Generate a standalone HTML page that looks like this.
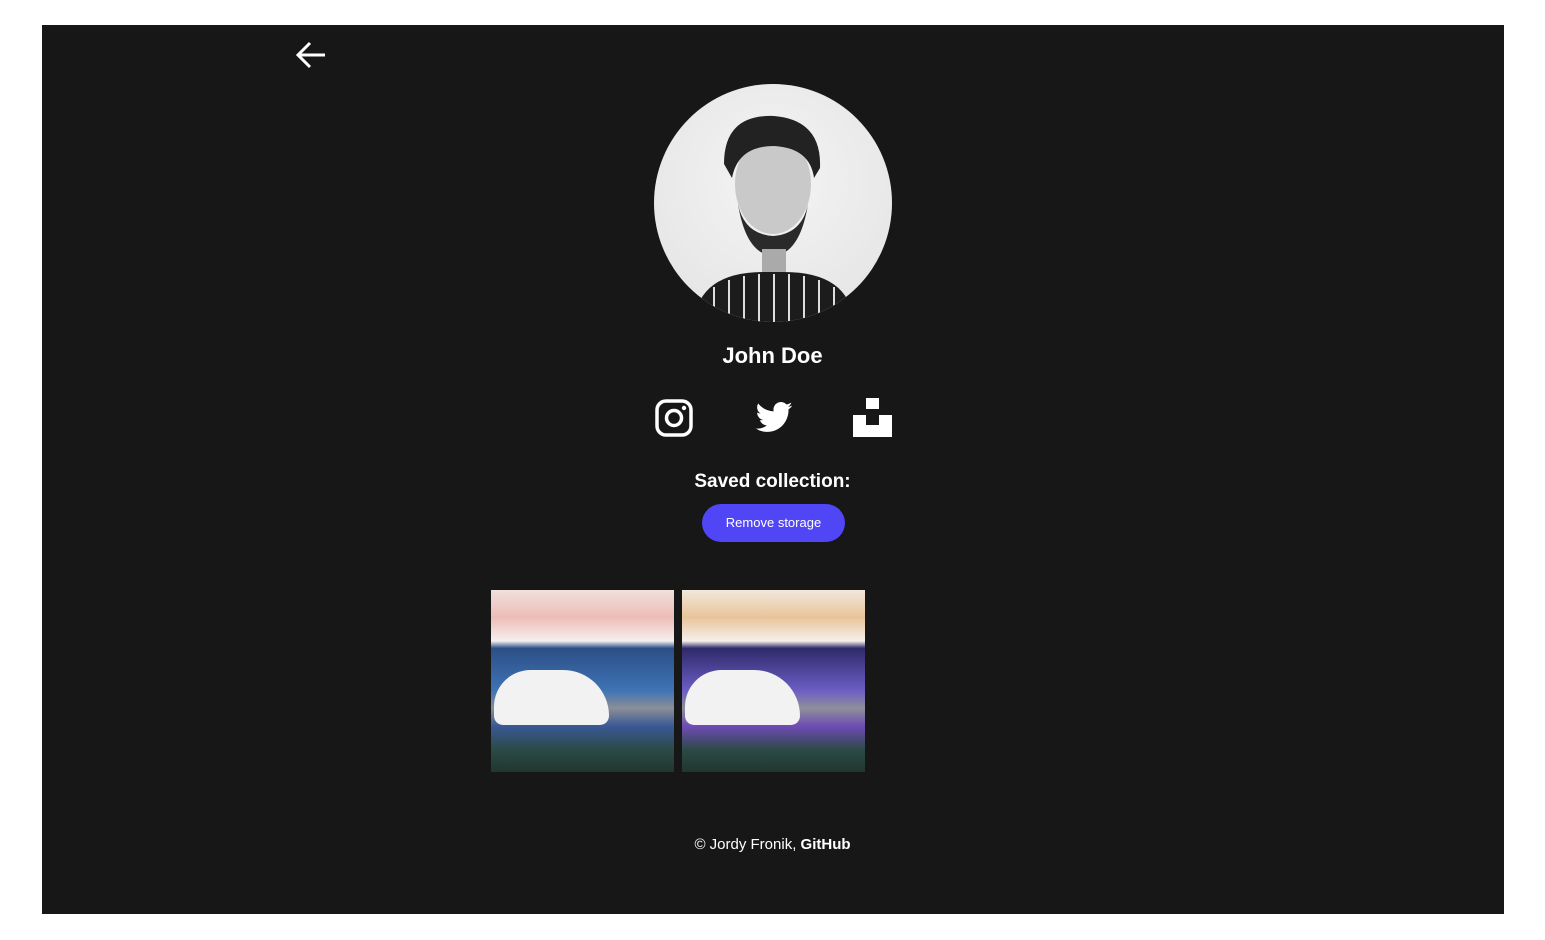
<!DOCTYPE html>
<html><head><style>
body{margin:0;width:1545px;height:940px;background:#fff;font-family:"Liberation Sans",sans-serif;position:relative;overflow:hidden}
#p{position:absolute;left:42px;top:25px;width:1462px;height:889px;background:#171717}
.a{position:absolute}
.img{position:absolute;top:590px;width:183px;height:182px;overflow:hidden}
</style></head><body>
<div id="p"></div>
<svg class="a" style="left:295px;top:40px" width="32" height="30" viewBox="0 0 32 30"><path d="M30 15H4M15 3L3 15l12 12" stroke="#fff" stroke-width="3" fill="none"/></svg>
<div class="a" style="left:654px;top:84px;width:238px;height:238px;border-radius:50%;overflow:hidden;background:radial-gradient(circle at 50% 40%,#f4f4f4,#e2e2e2)">
<svg width="238" height="238" viewBox="0 0 238 238">
<ellipse cx="119" cy="100" rx="38" ry="50" fill="#c9c9c9"/>
<path d="M70 80q0-50 50-48q48 4 46 52l-6 10q-4-30-40-32q-36 0-42 32z" fill="#222"/>
<path d="M84 120q8 50 35 52q27-2 35-52q-6 30-35 32q-29-2-35-32z" fill="#2a2a2a"/>
<rect x="108" y="165" width="24" height="25" fill="#aaa"/>
<path d="M40 238q5-50 70-50h20q65 0 70 50z" fill="#1c1c1c"/>
<g stroke="#ddd" stroke-width="2"><path d="M60 238v-35M75 238v-42M90 238v-46M105 238v-48M120 238v-48M135 238v-48M150 238v-46M165 238v-42M180 238v-35"/></g>
</svg></div>
<div class="a" style="left:0;width:1545px;top:343px;text-align:center;color:#fff;font-weight:bold;font-size:22px">John Doe</div>
<svg class="a" style="left:655px;top:399px" width="38" height="38" viewBox="0 0 38 38"><rect x="2" y="2" width="34" height="34" rx="9" stroke="#fff" stroke-width="3.5" fill="none"/><circle cx="19" cy="19" r="7.5" stroke="#fff" stroke-width="3.5" fill="none"/><circle cx="29" cy="9" r="2.2" fill="#fff"/></svg>
<svg class="a" style="left:754px;top:398px" width="40" height="40" viewBox="0 0 24 24"><path fill="#fff" d="M23 4.6a9 9 0 0 1-2.6.7 4.5 4.5 0 0 0 2-2.5 9 9 0 0 1-2.9 1.1A4.5 4.5 0 0 0 11.8 8 12.8 12.8 0 0 1 2.5 3.3a4.5 4.5 0 0 0 1.4 6 4.5 4.5 0 0 1-2-.6 4.5 4.5 0 0 0 3.6 4.5 4.5 4.5 0 0 1-2 .1 4.5 4.5 0 0 0 4.2 3.1A9 9 0 0 1 1 18.3 12.8 12.8 0 0 0 7.9 20.3c8.3 0 12.8-6.9 12.8-12.8v-.6A9 9 0 0 0 23 4.6z"/></svg>
<svg class="a" style="left:853px;top:398px" width="39" height="39" viewBox="0 0 39 39"><rect x="13" y="0" width="13" height="11" fill="#fff"/><path d="M0 17h13v10h13V17h13v22H0z" fill="#fff"/></svg>
<div class="a" style="left:0;width:1545px;top:471px;text-align:center;color:#fff;font-weight:bold;font-size:19px">Saved collection:</div>
<div class="a" style="left:702px;top:504px;width:143px;height:38px;border-radius:19px;background:#5146f5;color:#fff;font-size:13px;line-height:38px;text-align:center">Remove storage</div>
<div class="img" style="left:491px;background:linear-gradient(180deg,#f0e0dc 0%,#eebcb8 15%,#f5f0f0 28%,#2c4f86 32%,#3e73b5 55%,#8a8f98 65%,#3a5894 75%,#2b4a45 88%,#22362f 100%)"><div style="position:absolute;left:3px;top:80px;width:115px;height:55px;background:#f2f2f2;border-radius:40px 50px 10px 10px"></div></div>
<div class="img" style="left:682px;background:linear-gradient(180deg,#f2e8dc 0%,#e9c49a 15%,#f5f0ea 28%,#2f2a6a 32%,#6b5dc4 55%,#8f8f9a 65%,#6d4bb4 75%,#2b4a45 88%,#22362f 100%)"><div style="position:absolute;left:3px;top:80px;width:115px;height:55px;background:#f2f2f2;border-radius:40px 50px 10px 10px"></div></div>
<div class="a" style="left:0;width:1545px;top:836px;text-align:center;color:#fff;font-size:15px">© Jordy Fronik, <b>GitHub</b></div>
</body></html>
